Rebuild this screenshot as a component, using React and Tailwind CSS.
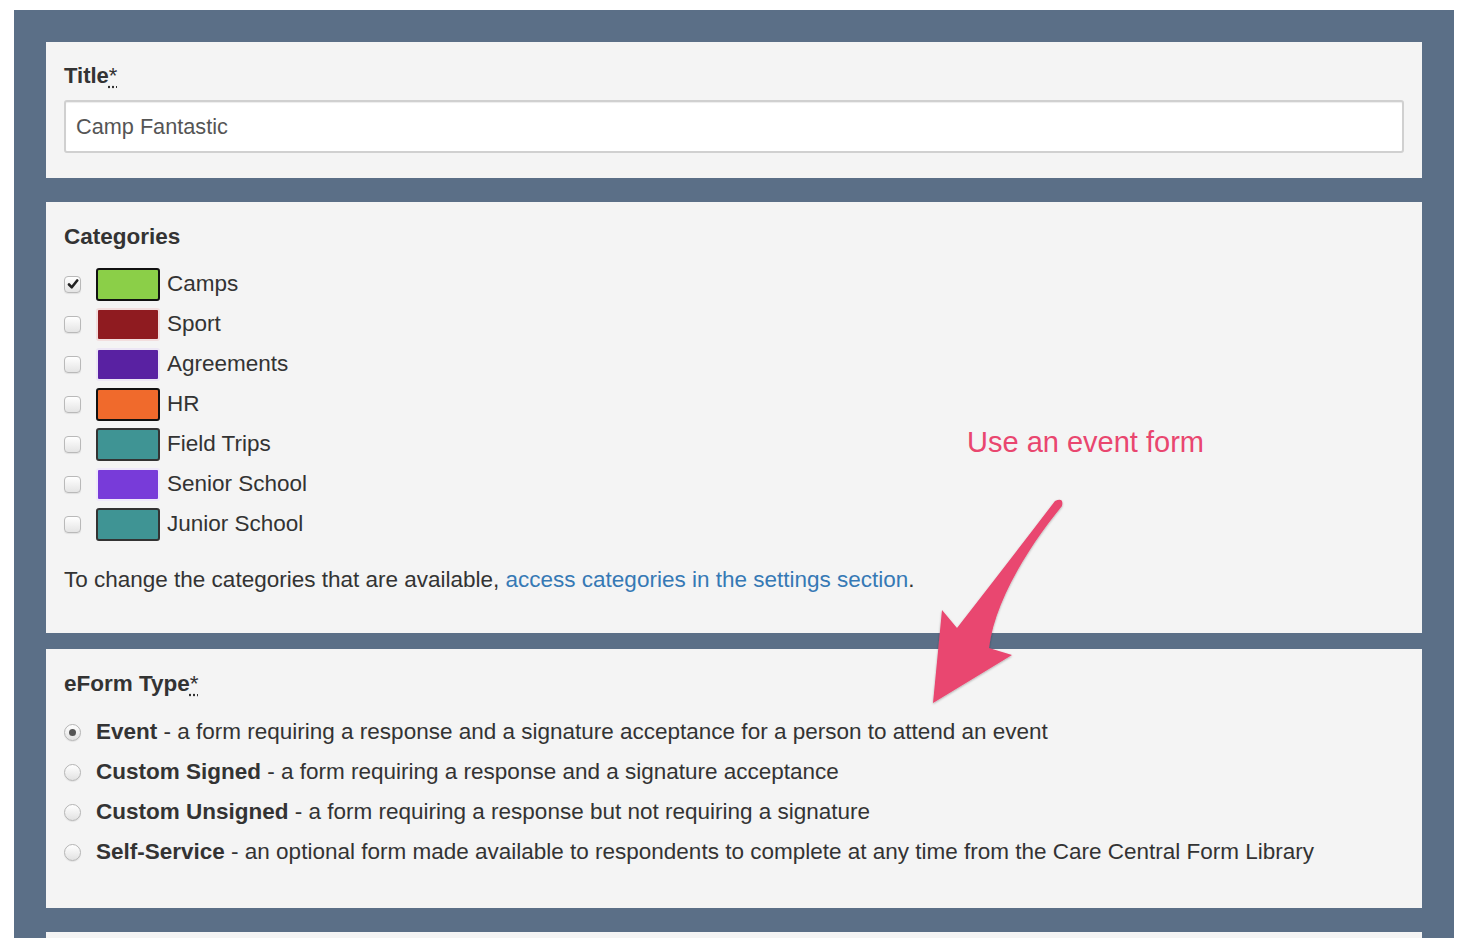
import React from "react";

const categories = [
  { name: "Camps", color: "bg-[#8bcf48]", border: "border-[#111]", checked: true },
  { name: "Sport", color: "bg-[#8f1b20]", border: "border-[#f2dede]" },
  { name: "Agreements", color: "bg-[#5921a2]", border: "border-[#ece6f5]" },
  { name: "HR", color: "bg-[#f06a2c]", border: "border-[#111]" },
  { name: "Field Trips", color: "bg-[#3f9494]", border: "border-[#333]" },
  { name: "Senior School", color: "bg-[#783bd9]", border: "border-[#efe8fb]" },
  { name: "Junior School", color: "bg-[#3f9494]", border: "border-[#333]" },
];

const formTypes = [
  { name: "Event", desc: "a form requiring a response and a signature acceptance for a person to attend an event", selected: true },
  { name: "Custom Signed", desc: "a form requiring a response and a signature acceptance" },
  { name: "Custom Unsigned", desc: "a form requiring a response but not requiring a signature" },
  { name: "Self-Service", desc: "an optional form made available to respondents to complete at any time from the Care Central Form Library" },
];

const Required = () => (
  <abbr title="required" className="font-normal underline decoration-dotted decoration-[#333] underline-offset-[3px]">
    *
  </abbr>
);

const Checkbox = ({ checked }) => (
  <span className="flex items-center justify-center w-[17px] h-[17px] rounded-[4px] border border-[#b9b9b9] bg-gradient-to-b from-white to-[#e4e4e4] shadow-[0_1px_1px_rgba(0,0,0,0.08)]">
    {checked && (
      <svg width="12" height="12" viewBox="0 0 12 12">
        <path d="M2 6.5 L4.8 9.3 L10.2 2.5" fill="none" stroke="#222" strokeWidth="2.6" strokeLinecap="round" strokeLinejoin="round" />
      </svg>
    )}
  </span>
);

const Radio = ({ selected }) => (
  <span className="flex items-center justify-center w-[17px] h-[17px] rounded-full border border-[#b5b5b5] bg-gradient-to-b from-white to-[#e2e2e2] shadow-[0_1px_1px_rgba(0,0,0,0.08)]">
    {selected && <span className="block w-[7px] h-[7px] rounded-full bg-[#555]" />}
  </span>
);

const App = () => {
  return (
    <div className="min-h-[938px] bg-white pt-[10px] pl-[14px] pr-[12px] font-['Liberation_Sans',Arial,sans-serif] text-[#333]">
      <div className="relative bg-[#5b6f87] px-[32px] pt-[32px] h-[928px] overflow-hidden">
        <div className="bg-[#f4f4f4] px-[18px] pt-[19px] pb-[25px] mb-[24px]">
          <h2 className="text-[22px] font-bold leading-[30px]">
            Title<Required />
          </h2>
          <input
            type="text"
            defaultValue="Camp Fantastic"
            className="mt-[9px] w-full h-[53px] px-[10px] bg-white border-2 border-[#d0d0d0] rounded-[3px] text-[21.7px] text-[#555] shadow-[inset_0_1px_1px_rgba(0,0,0,0.075)] outline-none"
          />
        </div>

        <div className="bg-[#f4f4f4] px-[18px] pt-[20px] pb-[38px] mb-[16px]">
          <h2 className="text-[22.5px] font-bold leading-[30px]">Categories</h2>
          <div className="mt-[12px]">
            {categories.map((c) => (
              <div key={c.name} className="flex items-center h-[40px]">
                <Checkbox checked={c.checked} />
                <span className={`ml-[15px] w-[64px] h-[33px] rounded-[3px] border-2 ${c.color} ${c.border}`} />
                <span className="ml-[7px] text-[22.5px]">{c.name}</span>
              </div>
            ))}
          </div>
          <p className="mt-[21px] text-[22.5px] leading-[30px]">
            To change the categories that are available,{" "}
            <a href="#" className="text-[#3679b5]">access categories in the settings section</a>.
          </p>
        </div>

        <div className="bg-[#f4f4f4] px-[18px] pt-[20px] pb-[36px] mb-[24px]">
          <h2 className="text-[22.5px] font-bold leading-[30px]">
            eForm Type<Required />
          </h2>
          <div className="mt-[13px]">
            {formTypes.map((t) => (
              <div key={t.name} className="flex items-center h-[40px]">
                <Radio selected={t.selected} />
                <span className="ml-[15px] text-[22.5px]">
                  <span className="font-bold">{t.name}</span> - {t.desc}
                </span>
              </div>
            ))}
          </div>
        </div>

        <div className="bg-[#f4f4f4] h-[60px]" />

        <div className="absolute left-[953px] top-[412px] text-[29px] leading-[40px] text-[#e9466f]">
          Use an event form
        </div>
        <svg
          className="absolute left-[0px] top-[0px] pointer-events-none"
          width="1440"
          height="928"
          viewBox="14 10 1440 928"
        >
          <defs>
            <filter id="sh" x="-20%" y="-20%" width="140%" height="140%">
              <feDropShadow dx="0" dy="1" stdDeviation="1.2" floodColor="#000" floodOpacity="0.3" />
            </filter>
          </defs>
          <path
            d="M1055 501 Q1010 560 957 628 L942 610 L933 703 L1012 655 L989 648 C995 600 1030 545 1062 506 Q1064 497 1055 501 Z"
            fill="#e9466f"
            filter="url(#sh)"
          />
        </svg>
      </div>
    </div>
  );
};

export default App;
